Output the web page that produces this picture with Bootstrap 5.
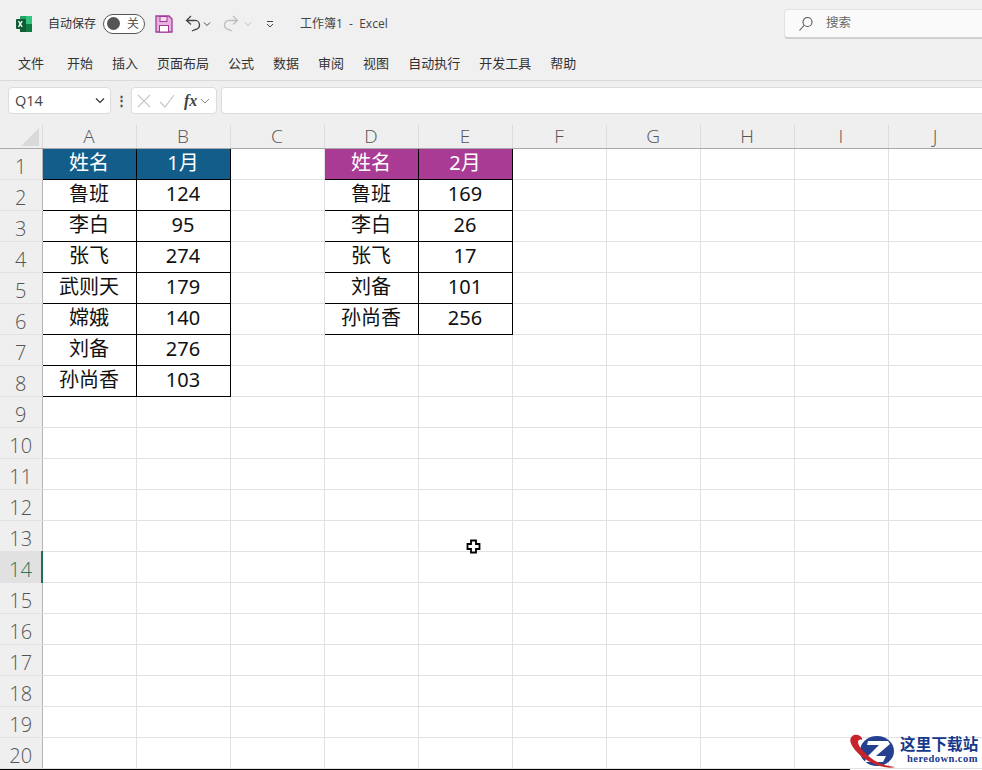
<!DOCTYPE html>
<html lang="zh-CN">
<head>
  <meta charset="UTF-8">
  <title>工作簿1 - Excel</title>
  <link href="https://cdn.jsdelivr.net/npm/bootstrap@5.3.0/dist/css/bootstrap.min.css" rel="stylesheet">
  <style>
    html, body { height: 770px; overflow: hidden; }
    body {
      position: relative;
      width: 982px;
      background: #fff;
      color: #333;
      font-family: "Open Sans", "Noto Sans CJK SC", sans-serif;
    }
    .title-row { height: 46px; padding-top: 1px; background: #f0f0f0; font-size: 12px; }
    .autosave { width: 48px; }
    .switch-off {
      width: 42px; height: 20px; margin-left: 7px; padding: 0 5px 0 3px;
      border: 1px solid #555; border-radius: 10px; background: #fff; font-size: 12px; color: #555;
    }
    .switch-dot { width: 13px; height: 13px; border-radius: 50%; background: #555; }
    .doc-title { margin-left: 25px; color: #444; white-space: pre; }
    .search-box {
      width: 198px; height: 30px; margin-left: auto; margin-top: 1px; padding-left: 13px;
      background: #fafafa; border: 1px solid #e2e2e2; border-bottom: 2px solid #d0d0d0; border-right: 0;
      border-radius: 4px 0 0 4px; color: #666; font-size: 12.5px;
    }
    .tab-row {
      height: 35px; padding: 1px 0 0 18px; gap: 19px; background: #f0f0f0;
      font-size: 13px; color: #333; border-bottom: 1px solid #d9d9d9;
      box-shadow: 0 1px 1px #e2e2e2;
    }
    .tab-row span { white-space: nowrap; }
    .tab-row span:first-child { margin-right: 4px; }
    .formula-row { height: 44px; padding: 6px 0 11px 8px; background: #efefef; }
    .fbox { height: 27px; background: #fff; border: 1px solid #dcdcdc; border-radius: 4px; }
    .name-box { width: 103px; padding: 0 5px 0 6px; font-size: 14.5px; color: #444; }
    .fx-box { width: 86px; padding: 0 3px 0 5px; }
    .fx-label { font-family: "Liberation Serif", serif; font-style: italic; font-weight: 700; font-size: 16px; margin-left: 9px; color: #444; }
    .vdots { width: 20px; text-align: center; font-weight: 700; font-size: 13px; line-height: 1; color: #444; }
    .input-box { margin-left: 4px; flex: 1; border-right: 0; border-radius: 4px 0 0 4px; }

    .sheet { table-layout: fixed; border-collapse: collapse; width: 982px; }
    .sheet th, .sheet td { padding: 0; text-align: center; }
    .sheet td { height: 31px; padding-bottom: 2px; border: 1px solid #e1e1e1; font-size: 20px; line-height: 26px; color: #111; font-family: "Noto Sans", "Noto Sans CJK SC", sans-serif; }
    .sheet thead th {
      height: 23px; background: #efefef; color: #555; font-weight: 300; font-size: 19px; line-height: 23px;
      border-bottom: 1px solid #a9a9a9; border-right: 1px solid #dcdcdc;
    }
    .sheet .row-head {
      background: #efefef; color: #555; font-weight: 300; font-size: 20px; line-height: 20px;
      padding-top: 6px; padding-bottom: 0; border: 0; border-right: 1px solid #b5b5b5; border-bottom: 1px solid #e1e1e1;
      font-family: "Open Sans", sans-serif;
    }
    .sheet .row-head.active-row { background: #e1e1e1; color: #2d7358; border-right: 2px solid #21704f; }
    .sheet .corner { position: relative; }
    .corner-mark { position: absolute; right: 3px; bottom: 2px; width: 0; height: 0; border-left: 18px solid transparent; border-bottom: 18px solid #d9d9d9; }
    .sheet td.boxed { border-color: #000; }
    .sheet td.head-blue { border-color: #000; background: #125d8a; color: #fff; }
    .sheet td.head-pink { border-color: #000; background: #a93b94; color: #fff; }
    .page-end { width: 850px; height: 1px; background: #000; }

    .cursor-mark { position: absolute; left: 466px; top: 539px; }
    .watermark { position: absolute; left: 850px; top: 734px; width: 132px; height: 36px; }
    .wm-text { position: absolute; left: 50px; top: 2px; font-family: "Liberation Serif", "Noto Sans CJK SC", serif; color: #14398c; white-space: nowrap; }
    .wm-name { font-size: 15.5px; font-weight: 700; line-height: 17px; letter-spacing: .2px; }
    .wm-url { font-size: 10.5px; font-weight: 700; line-height: 11px; margin-left: 7px; letter-spacing: .45px; }
  </style>
</head>
<body>
  <!-- 标题栏 -->
  <div class="title-row d-flex align-items-center">
    <svg width="18" height="18" viewBox="0 0 18 18" style="margin-left:15px">
      <rect x="5" y="1" width="12" height="16" rx="1" fill="#21a366"/>
      <rect x="11" y="1" width="6" height="8" fill="#33c481"/>
      <rect x="11" y="9" width="6" height="8" fill="#107c41"/>
      <rect x="5" y="9" width="6" height="8" fill="#185c37"/>
      <rect x="1" y="4" width="10" height="10" rx="1" fill="#0f5c34"/>
      <path d="M3.5 6.2l3.6 5.6M7.1 6.2l-3.6 5.6" stroke="#fff" stroke-width="1.3"/>
    </svg>
    <span class="autosave" style="margin-left:15px">自动保存</span>
    <div class="switch-off d-flex align-items-center justify-content-between">
      <span class="switch-dot"></span><span>关</span>
    </div>
    <svg width="18" height="18" viewBox="0 0 18 18" style="margin-left:10px">
      <path d="M1 1h13l3 3v13H1z" fill="#e6b3de" stroke="#a2399a" stroke-width="1.3"/>
      <rect x="5" y="1.5" width="7" height="5" fill="#f3dcef" stroke="#a2399a"/>
      <rect x="4.5" y="10.5" width="9" height="6.5" fill="#fff" stroke="#a2399a"/>
    </svg>
    <svg width="16" height="17" viewBox="0 0 16 17" fill="none" stroke="#444" stroke-width="1.3" style="margin-left:12px">
      <path d="M6 1L1.5 5.5 6 9.5M1.5 5.5h8a4.5 4.5 0 0 1 1 9L7 16"/>
    </svg>
    <svg width="8" height="6" viewBox="0 0 8 6" fill="none" stroke="#444" style="margin-left:2px"><path d="M1 1.5l3 3 3-3"/></svg>
    <svg width="16" height="17" viewBox="0 0 16 17" fill="none" stroke="#bdbdbd" stroke-width="1.3" style="margin-left:12px">
      <path d="M10 1l4.5 4.5L10 9.5M14.5 5.5h-8a4.5 4.5 0 0 0-1 9L9 16"/>
    </svg>
    <svg width="8" height="6" viewBox="0 0 8 6" fill="none" stroke="#bdbdbd" style="margin-left:5px"><path d="M1 1.5l3 3 3-3"/></svg>
    <svg width="10" height="8" viewBox="0 0 10 8" fill="none" stroke="#444" style="margin-left:13px"><path d="M2 1.5h6M2 4l3 3 3-3"/></svg>
    <span class="doc-title">工作簿1  -  Excel</span>
    <div class="search-box d-flex align-items-center gap-2">
      <svg width="16" height="16" viewBox="0 0 16 16" fill="none" stroke="#555" stroke-width="1.1">
        <circle cx="9.5" cy="6" r="4.5"/><path d="M6 9.5L1.5 14.5"/>
      </svg>
      <span style="margin-left:4px">搜索</span>
    </div>
  </div>

  <!-- 功能区选项卡 -->
  <div class="tab-row d-flex align-items-center">
    <span>文件</span><span>开始</span><span>插入</span><span>页面布局</span><span>公式</span><span>数据</span><span>审阅</span><span>视图</span><span>自动执行</span><span>开发工具</span><span>帮助</span>
  </div>

  <!-- 编辑栏 -->
  <div class="formula-row d-flex align-items-center">
    <div class="fbox name-box d-flex align-items-center justify-content-between">
      <span>Q14</span>
      <svg width="10" height="7" viewBox="0 0 10 7" fill="none" stroke="#333" stroke-width="1.2"><path d="M1 1.5l4 4 4-4"/></svg>
    </div>
    <div class="vdots">⋮</div>
    <div class="fbox fx-box d-flex align-items-center">
      <svg width="14" height="14" viewBox="0 0 14 14" fill="none" stroke="#c8c8c8" stroke-width="1.2"><path d="M1 1l12 12M13 1L1 13"/></svg>
      <svg width="16" height="14" viewBox="0 0 16 14" fill="none" stroke="#c8c8c8" stroke-width="1.2" style="margin-left:8px"><path d="M1 8l5 5L15 1"/></svg>
      <span class="fx-label">fx</span>
      <svg width="10" height="6" viewBox="0 0 10 6" fill="none" stroke="#888" style="margin-left:3px"><path d="M1 1l4 4 4-4"/></svg>
    </div>
    <div class="fbox input-box"></div>
  </div>

  <!-- 工作表 -->
  <table class="sheet">
    <colgroup id="cols"></colgroup>
    <thead><tr id="colHead"></tr></thead>
    <tbody id="rows"></tbody>
  </table>
  <div class="page-end"></div>

  <!-- 鼠标指针 -->
  <svg class="cursor-mark" width="15" height="15" viewBox="0 0 15 15">
    <path d="M5 1.5h5v3.5h3.500v5H10v3.500H5V10H1.500V5H5z" fill="#fff" stroke="#000" stroke-width="1.8"/>
  </svg>

  <!-- 水印 -->
  <div class="watermark">
    <svg width="50" height="36" viewBox="0 0 50 36">
      <ellipse cx="27" cy="17" rx="17" ry="15" fill="#24408f"/>
      <path d="M18 7h20l2 3-14 12h10l-3 6H15l1-4 13-13H17z" fill="#fff"/>
      <path d="M4 1C-2 4 0 10 5 16c5 6 14 13 25 16 7 2 12 2 15 1-9-1-16-3-24-9C13 18 8 12 8 8c0-2 2-3 4-2 1-3-4-6-8-5z" fill="#c8252b"/>
    </svg>
    <div class="wm-text">
      <div class="wm-name">这里下载站</div>
      <div class="wm-url">heredown.com</div>
    </div>
  </div>

  <script>
    const letras = ['A', 'B', 'C', 'D', 'E', 'F', 'G', 'H', 'I', 'J'];
    const esquerda = [['姓名', '1月'], ['鲁班', 124], ['李白', 95], ['张飞', 274], ['武则天', 179], ['嫦娥', 140], ['刘备', 276], ['孙尚香', 103]];
    const direita = [['姓名', '2月'], ['鲁班', 169], ['李白', 26], ['张飞', 17], ['刘备', 101], ['孙尚香', 256]];

    let cols = '<col style="width:42px">';
    let head = '<th class="corner"><span class="corner-mark"></span></th>';
    letras.forEach(l => {
      cols += '<col style="width:94px">';
      head += `<th>${l}</th>`;
    });
    document.getElementById('cols').innerHTML = cols;
    document.getElementById('colHead').innerHTML = head;

    function celula(dados, r, c, cabecalho) {
      if (!dados[r]) return '<td></td>';
      const cls = r === 0 ? cabecalho : 'boxed';
      return `<td class="${cls}">${dados[r][c]}</td>`;
    }

    let corpo = '';
    for (let r = 0; r < 20; r++) {
      corpo += `<tr><th class="row-head${r === 13 ? ' active-row' : ''}">${r + 1}</th>`;
      corpo += celula(esquerda, r, 0, 'head-blue') + celula(esquerda, r, 1, 'head-blue');
      corpo += '<td></td>';
      corpo += celula(direita, r, 0, 'head-pink') + celula(direita, r, 1, 'head-pink');
      corpo += '<td></td><td></td><td></td><td></td><td></td></tr>';
    }
    document.getElementById('rows').innerHTML = corpo;
  </script>
  <script src="https://cdn.jsdelivr.net/npm/bootstrap@5.3.0/dist/js/bootstrap.bundle.min.js"></script>
</body>
</html>
